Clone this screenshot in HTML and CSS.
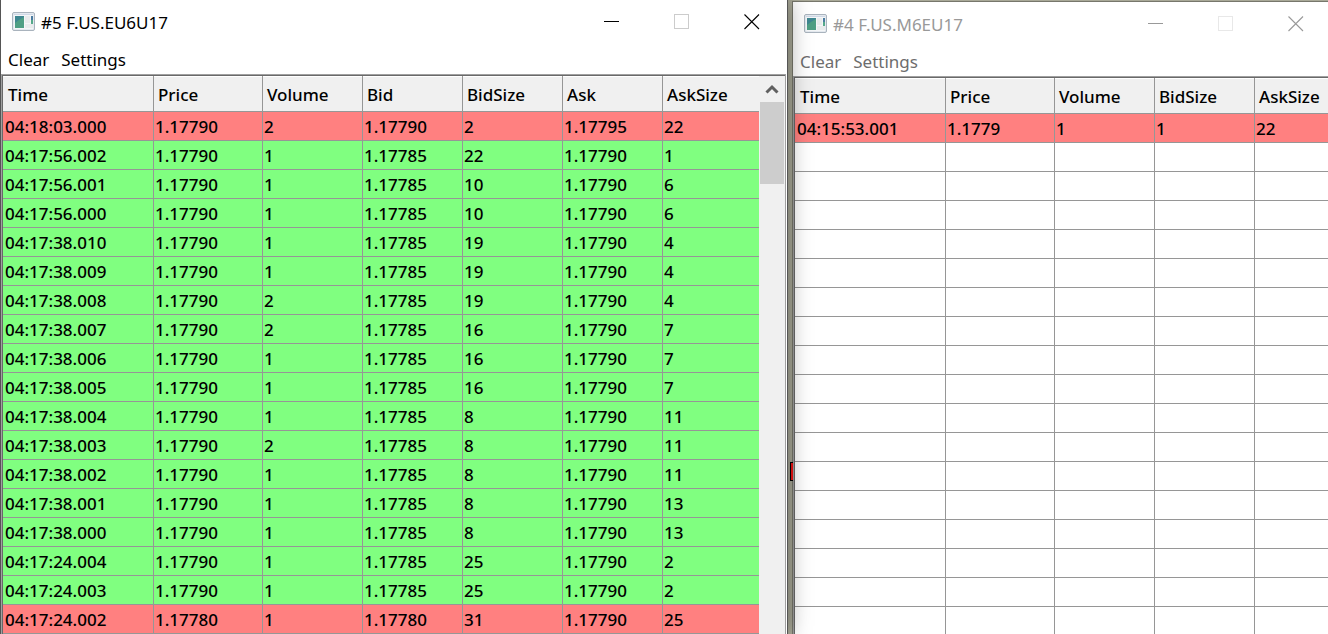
FILE: index.html
```
<!DOCTYPE html>
<html lang="en">

<head>
  <meta charset="utf-8">
  <meta name="viewport" content="width=device-width, initial-scale=1">
  <title>Time and sales</title>
  <link rel="stylesheet" href="styles.css">
</head>

<body>
  <svg class="defs">
    <symbol id="app" viewBox="0 0 24 20">
      <rect x="0.5" y="0.5" width="22" height="18" rx="1.5" fill="#e4e9ef" stroke="#a9b3bd" />
      <rect x="2" y="2" width="19" height="1" fill="#cfd8e6" />
      <rect x="2" y="3" width="19" height="14" fill="#f4f6f7" />
      <rect x="3" y="4" width="9" height="12" fill="#3f8791" />
      <path d="M3 16V11Q8 7 12 5V16Z" fill="#4f9f84" />
      <rect x="13" y="4" width="5" height="7" fill="#e8ebec" />
      <rect x="13" y="12" width="8" height="4" fill="#e8ebec" />
      <rect x="19" y="4" width="2" height="4" fill="#4a7ba0" />
      <rect x="19" y="8" width="2" height="4" fill="#55a98a" />
    </symbol>
    <symbol id="min" viewBox="0 0 16 16">
      <path d="M0 7.5H15" stroke="currentColor" fill="none" />
    </symbol>
    <symbol id="max" viewBox="0 0 16 16">
      <rect x="0.5" y="0.5" width="14" height="14" stroke="currentColor" fill="none" />
    </symbol>
    <symbol id="close" viewBox="0 0 16 16">
      <path d="M0.5 0.5L15 15M15 0.5L0.5 15" stroke="currentColor" stroke-width="1.1" fill="none" />
    </symbol>
  </svg>

  <div class="window active">
    <div class="titlebar">
      <svg class="icon"><use href="#app" /></svg>
      <span class="title">#5 F.US.EU6U17</span>
      <button class="ctl" aria-label="Minimize"><svg><use href="#min" /></svg></button>
      <button class="ctl" aria-label="Maximize" disabled><svg><use href="#max" /></svg></button>
      <button class="ctl" aria-label="Close"><svg><use href="#close" /></svg></button>
    </div>
    <div class="menu">
      <button>Clear</button>
      <button>Settings</button>
    </div>
    <div class="list">
      <table>
        <colgroup>
          <col class="time"><col class="price"><col class="num"><col class="num"><col class="num"><col class="num"><col class="last">
        </colgroup>
        <thead>
          <tr><th>Time</th><th>Price</th><th>Volume</th><th>Bid</th><th>BidSize</th><th>Ask</th><th>AskSize</th></tr>
        </thead>
        <tbody>
          <tr class="sell"><td>04:18:03.000</td><td>1.17790</td><td>2</td><td>1.17790</td><td>2</td><td>1.17795</td><td>22</td></tr>
          <tr class="buy"><td>04:17:56.002</td><td>1.17790</td><td>1</td><td>1.17785</td><td>22</td><td>1.17790</td><td>1</td></tr>
          <tr class="buy"><td>04:17:56.001</td><td>1.17790</td><td>1</td><td>1.17785</td><td>10</td><td>1.17790</td><td>6</td></tr>
          <tr class="buy"><td>04:17:56.000</td><td>1.17790</td><td>1</td><td>1.17785</td><td>10</td><td>1.17790</td><td>6</td></tr>
          <tr class="buy"><td>04:17:38.010</td><td>1.17790</td><td>1</td><td>1.17785</td><td>19</td><td>1.17790</td><td>4</td></tr>
          <tr class="buy"><td>04:17:38.009</td><td>1.17790</td><td>1</td><td>1.17785</td><td>19</td><td>1.17790</td><td>4</td></tr>
          <tr class="buy"><td>04:17:38.008</td><td>1.17790</td><td>2</td><td>1.17785</td><td>19</td><td>1.17790</td><td>4</td></tr>
          <tr class="buy"><td>04:17:38.007</td><td>1.17790</td><td>2</td><td>1.17785</td><td>16</td><td>1.17790</td><td>7</td></tr>
          <tr class="buy"><td>04:17:38.006</td><td>1.17790</td><td>1</td><td>1.17785</td><td>16</td><td>1.17790</td><td>7</td></tr>
          <tr class="buy"><td>04:17:38.005</td><td>1.17790</td><td>1</td><td>1.17785</td><td>16</td><td>1.17790</td><td>7</td></tr>
          <tr class="buy"><td>04:17:38.004</td><td>1.17790</td><td>1</td><td>1.17785</td><td>8</td><td>1.17790</td><td>11</td></tr>
          <tr class="buy"><td>04:17:38.003</td><td>1.17790</td><td>2</td><td>1.17785</td><td>8</td><td>1.17790</td><td>11</td></tr>
          <tr class="buy"><td>04:17:38.002</td><td>1.17790</td><td>1</td><td>1.17785</td><td>8</td><td>1.17790</td><td>11</td></tr>
          <tr class="buy"><td>04:17:38.001</td><td>1.17790</td><td>1</td><td>1.17785</td><td>8</td><td>1.17790</td><td>13</td></tr>
          <tr class="buy"><td>04:17:38.000</td><td>1.17790</td><td>1</td><td>1.17785</td><td>8</td><td>1.17790</td><td>13</td></tr>
          <tr class="buy"><td>04:17:24.004</td><td>1.17790</td><td>1</td><td>1.17785</td><td>25</td><td>1.17790</td><td>2</td></tr>
          <tr class="buy"><td>04:17:24.003</td><td>1.17790</td><td>1</td><td>1.17785</td><td>25</td><td>1.17790</td><td>2</td></tr>
          <tr class="sell"><td>04:17:24.002</td><td>1.17780</td><td>1</td><td>1.17780</td><td>31</td><td>1.17790</td><td>25</td></tr>
        </tbody>
      </table>
      <div class="scrollbar">
        <button aria-label="Scroll up"><svg viewBox="0 0 14 10"><path d="M1.5 8.5L7 3L12.5 8.5" stroke="#606060" stroke-width="3" fill="none" /></svg></button>
        <div class="thumb"></div>
      </div>
    </div>
  </div>

  <div class="gap"><span class="mark"></span></div>

  <div class="window inactive">
    <div class="titlebar">
      <svg class="icon"><use href="#app" /></svg>
      <span class="title">#4 F.US.M6EU17</span>
      <button class="ctl" aria-label="Minimize"><svg><use href="#min" /></svg></button>
      <button class="ctl" aria-label="Maximize" disabled><svg><use href="#max" /></svg></button>
      <button class="ctl" aria-label="Close"><svg><use href="#close" /></svg></button>
    </div>
    <div class="menu">
      <button>Clear</button>
      <button>Settings</button>
    </div>
    <div class="list">
      <table>
        <colgroup>
          <col class="time"><col class="price"><col class="num"><col class="num"><col class="last">
        </colgroup>
        <thead>
          <tr><th>Time</th><th>Price</th><th>Volume</th><th>BidSize</th><th>AskSize</th></tr>
        </thead>
        <tbody>
          <tr class="sell"><td>04:15:53.001</td><td>1.1779</td><td>1</td><td>1</td><td>22</td></tr>
          <tr><td></td><td></td><td></td><td></td><td></td></tr>
          <tr><td></td><td></td><td></td><td></td><td></td></tr>
          <tr><td></td><td></td><td></td><td></td><td></td></tr>
          <tr><td></td><td></td><td></td><td></td><td></td></tr>
          <tr><td></td><td></td><td></td><td></td><td></td></tr>
          <tr><td></td><td></td><td></td><td></td><td></td></tr>
          <tr><td></td><td></td><td></td><td></td><td></td></tr>
          <tr><td></td><td></td><td></td><td></td><td></td></tr>
          <tr><td></td><td></td><td></td><td></td><td></td></tr>
          <tr><td></td><td></td><td></td><td></td><td></td></tr>
          <tr><td></td><td></td><td></td><td></td><td></td></tr>
          <tr><td></td><td></td><td></td><td></td><td></td></tr>
          <tr><td></td><td></td><td></td><td></td><td></td></tr>
          <tr><td></td><td></td><td></td><td></td><td></td></tr>
          <tr><td></td><td></td><td></td><td></td><td></td></tr>
          <tr><td></td><td></td><td></td><td></td><td></td></tr>
          <tr><td></td><td></td><td></td><td></td><td></td></tr>
        </tbody>
      </table>
    </div>
  </div>
</body>

</html>
```
FILE: styles.css
```
* {
  box-sizing: border-box;
}

body {
  margin: 0;
  height: 100vh;
  display: flex;
  overflow: hidden;
  background: #a9a998;
  color: #000;
  font-family: "Segoe UI", "Noto Sans", "Open Sans", sans-serif;
  font-size: 17px;
}

button {
  margin: 0;
  padding: 0;
  border: 0;
  background: none;
  color: inherit;
  font: inherit;
}

.defs {
  display: none;
}

.window {
  display: flex;
  flex-direction: column;
  background: #fff;
}

/* the focused window throws its shadow over the one behind */
.active {
  position: relative;
  z-index: 1;
  flex: none;
  border-left: 1px solid #555;
  border-right: 1px solid #555;
  box-shadow: 0 0 22px rgba(0, 0, 0, .4);
}

/* runs a little past the right edge of the screen */
.inactive {
  flex: 1;
  min-width: 0;
  margin-top: 1px;
  margin-right: -3px;
  border-top: 1px solid #77776c;
  border-left: 1px solid #77776c;
}

.gap {
  width: 4px;
  background: #a9a998;
}

.mark {
  position: absolute;
  z-index: 2;
  top: 462px;
  width: 3px;
  height: 19px;
  margin-left: 2px;
  background: #d01010;
  border: 1px solid #000;
  border-right: 0;
}

.titlebar {
  display: flex;
  align-items: center;
  height: 44px;
  padding-left: 11px;
}

.icon {
  width: 24px;
  height: 20px;
}

.title {
  flex: 1;
  margin-left: 5px;
  white-space: nowrap;
}

.ctl {
  display: flex;
  align-items: center;
  justify-content: center;
  width: 70px;
  height: 44px;
}

.ctl svg {
  width: 16px;
  height: 16px;
}

.ctl:disabled {
  color: #ccc;
}

.menu {
  display: flex;
  gap: 12px;
  height: 28px;
  padding: 3px 7px 0;
}

.inactive .title,
.inactive .ctl {
  color: #999;
}

.inactive .ctl:disabled {
  color: #e8e8e8;
}

.inactive .menu {
  color: #6d6d6d;
}

.list {
  display: flex;
  flex: 1;
  min-height: 0;
  overflow: hidden;
  margin: 3px 2px 0 1px;
  border-top: 1px solid #696969;
  border-left: 1px solid #696969;
  outline: 1px solid #a0a0a0;
}

table {
  table-layout: fixed;
  border-collapse: separate;
  border-spacing: 0;
  width: 756px;
  height: max-content;
}

.inactive table {
  width: 100%;
}

.time {
  width: 151px;
}

.price {
  width: 109px;
}

.num {
  width: 100px;
}

th,
td {
  border-right: 1px solid #969696;
  border-bottom: 1px solid #969696;
  text-align: left;
  font-weight: 500;
  white-space: nowrap;
}

th:last-child,
td:last-child {
  border-right: 0;
}

th {
  height: 36px;
  padding: 2px 0 0 5px;
  background: #f0f0f0;
  box-shadow: inset 0 1px #fff;
}

td {
  height: 29px;
  padding: 0 0 0 2px;
}

th + th {
  padding-left: 4px;
}

td + td {
  padding-left: 1px;
}

.sell td {
  background: #ff8080;
}

.buy td {
  background: #80ff80;
}

.scrollbar {
  width: 26px;
  padding: 0 1px;
  background: #f0f0f0;
}

.scrollbar button {
  display: flex;
  align-items: center;
  justify-content: center;
  width: 24px;
  height: 26px;
}

.scrollbar button svg {
  width: 14px;
  height: 10px;
}

.thumb {
  height: 82px;
  background: #cdcdcd;
}
```
